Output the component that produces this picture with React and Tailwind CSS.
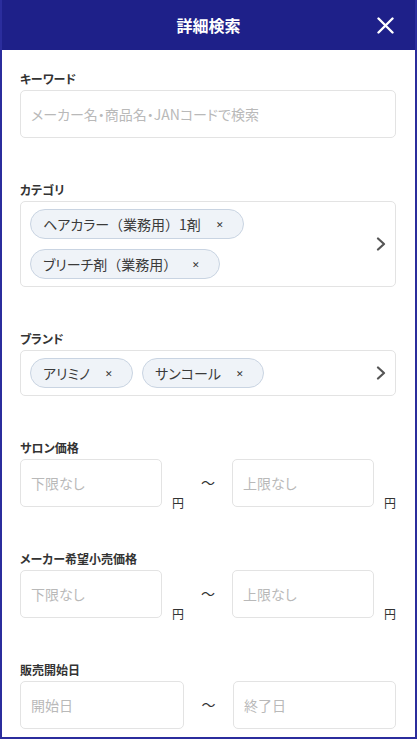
import React from 'react';

const P = ({ children }) => <span className="[font-feature-settings:normal]">{children}</span>;

const categories = [
  { id: 'hc', label: <>ヘアカラー<P>（</P>業務用<P>）</P>1剤</> },
  { id: 'bl', label: <>ブリーチ剤<P>（</P>業務用<P>）</P></> },
];
const brands = [
  { id: 'ar', label: 'アリミノ' },
  { id: 'sc', label: 'サンコール' },
];

const Label = ({ children }) => (
  <div className="text-[12px] leading-[20px] font-bold text-[#333] mb-[1px]">{children}</div>
);

const Field = ({ placeholder, className = '' }) => (
  <input
    type="text"
    placeholder={placeholder}
    className={`h-[48px] border border-[#e3e3e3] rounded-[5px] px-[10px] text-[14px] text-[#333] placeholder:text-[#b9b9b9] outline-none ${className}`}
  />
);

const Chip = ({ label }) => (
  <span className="inline-flex items-center h-[30px] pl-[12px] pr-[19px] rounded-full border border-[#c9d4e2] bg-[#eff3f8] text-[14px] text-[#3a3a3a]">
    {label}
    <span className="ml-[15px] text-[9px] leading-none text-[#333]">✕</span>
  </span>
);

const Chevron = () => (
  <svg width="10" height="14" viewBox="0 0 10 14" className="shrink-0">
    <polyline points="2,1.5 8,7 2,12.5" fill="none" stroke="#555" strokeWidth="2.2" strokeLinecap="round" strokeLinejoin="round" />
  </svg>
);

const TagBox = ({ items, wrap }) => (
  <div className="flex items-center border border-[#e3e3e3] rounded-[5px] pl-[9px] pr-[9px] py-[7px]">
    <div className={wrap ? 'flex flex-col items-start gap-[10px] flex-1' : 'flex gap-[9px] flex-1'}>
      {items.map((c) => (
        <Chip key={c.id} label={c.label} />
      ))}
    </div>
    <Chevron />
  </div>
);

const Yen = () => (
  <span className="ml-[10px] w-[12px] text-[12px] leading-[12px] text-[#333] -mb-[2px]">円</span>
);

const PriceRow = () => (
  <div className="flex items-end">
    <Field placeholder="下限なし" className="w-[142px]" />
    <Yen />
    <span className="w-[49px] self-center text-center text-[14px] text-[#333] -mt-[2px]">〜</span>
    <Field placeholder="上限なし" className="w-[142px]" />
    <Yen />
  </div>
);

export default function App() {
  return (
    <div className="w-[417px] h-[739px] overflow-hidden bg-white border-x-2 border-b-2 border-[#2b2d9d] font-['Noto_Sans_CJK_JP','Noto_Sans',sans-serif] [font-feature-settings:'palt']">
      <header className="relative h-[50px] bg-[#1e2089] flex items-center justify-center">
        <h1 className="text-white text-[16px] font-bold">詳細検索</h1>
        <button className="absolute right-[21px] top-[17px]" aria-label="閉じる">
          <svg width="17" height="17" viewBox="0 0 17 17">
            <path d="M1.5 1.5 L15.5 15.5 M15.5 1.5 L1.5 15.5" stroke="#fff" strokeWidth="2.4" strokeLinecap="round" />
          </svg>
        </button>
      </header>

      <div className="pl-[18px] pr-[19px] pt-[19px] flex flex-col gap-[42px]">
        <section>
          <Label>キーワード</Label>
          <Field placeholder="メーカー名・商品名・JANコードで検索" className="w-full" />
        </section>

        <section>
          <Label>カテゴリ</Label>
          <TagBox items={categories} wrap />
        </section>

        <section>
          <Label>ブランド</Label>
          <TagBox items={brands} />
        </section>

        <section>
          <Label>サロン価格</Label>
          <PriceRow />
        </section>

        <section>
          <Label>メーカー希望小売価格</Label>
          <PriceRow />
        </section>

        <section>
          <Label>販売開始日</Label>
          <div className="flex items-center">
            <Field placeholder="開始日" className="w-[164px]" />
            <span className="w-[49px] text-center text-[14px] text-[#333] -mt-[2px]">〜</span>
            <Field placeholder="終了日" className="flex-1 min-w-0" />
          </div>
        </section>
      </div>
    </div>
  );
}
